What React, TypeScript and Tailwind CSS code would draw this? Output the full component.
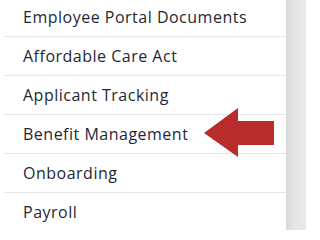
import React from "react";

const items = [
  "Employee Portal Documents",
  "Affordable Care Act",
  "Applicant Tracking",
  "Benefit Management",
  "Onboarding",
  "Payroll",
];

export default function App() {
  return (
    <div className="relative flex w-[306px] h-[230px] overflow-hidden bg-white">
      <div className="w-[286px] h-full bg-white">
        <ul className="ml-[4px] -mt-[2px]">
          {items.map((t) => (
            <li
              key={t}
              className="h-[39px] flex items-center border-b border-[#e6e6e6] pl-[19px] text-[16px] tracking-[0.5px] text-[#1f2735]"
              style={{ fontFamily: '"Open Sans", sans-serif' }}
            >
              {t}
            </li>
          ))}
        </ul>
      </div>
      <div className="w-[20px] h-full bg-gradient-to-r from-[#d9d9d9] via-[#e6e6e6] to-[#e9e9e9]" />
      <svg
        className="absolute left-0 top-0"
        width="306"
        height="230"
        viewBox="0 0 306 230"
      >
        <polygon
          points="204,133 238,108 238,121 274,121 274,145 238,145 238,157"
          fill="#b92c2c"
        />
      </svg>
    </div>
  );
}
